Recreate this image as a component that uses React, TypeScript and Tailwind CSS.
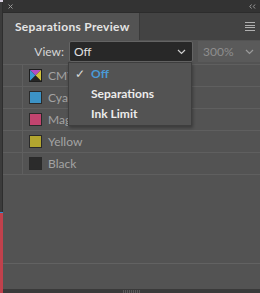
const rows = [
  { name: "CMYK", kind: "cmyk" },
  { name: "Cyan", color: "bg-[#3c93c6]" },
  { name: "Magenta", color: "bg-[#c2446f]" },
  { name: "Yellow", color: "bg-[#b2a52f]" },
  { name: "Black", color: "bg-[#2b2b2b]" },
];

function Chevron({ className }: { className?: string }) {
  return (
    <svg className={className} width="9" height="6" viewBox="0 0 9 6" fill="none">
      <path d="M1 1l3.5 3.5L8 1" stroke="currentColor" strokeWidth="1.2" />
    </svg>
  );
}

function CmykSwatch() {
  return (
    <svg width="13" height="13" viewBox="0 0 13 13">
      <rect x="0" y="0" width="13" height="13" fill="#1e1e1e" />
      <polygon points="1,1 12,1 6.5,6.5" fill="#b24fc4" />
      <polygon points="12,1 12,12 6.5,6.5" fill="#cfc23a" />
      <polygon points="1,1 6.5,6.5 1,12" fill="#3a9ad0" />
      <polygon points="1,12 12,12 6.5,6.5" fill="#262626" />
    </svg>
  );
}

export default function App() {
  return (
    <div className="relative flex h-[293px] w-[260px] overflow-hidden bg-[#535353] font-['Lato',sans-serif]">
      {/* left edge */}
      <div className="flex w-[3px] shrink-0 flex-col bg-[#3b3b3b]">
        <div className="h-[2px] bg-[#d8d0e0]" />
        <div className="h-[210px] border-r border-[#2e2e2e]" />
        <div className="h-[1px] bg-[#2f8fd0]" />
        <div className="flex-1 bg-[#c0414c]" />
      </div>

      <div className="flex min-w-0 flex-1 flex-col">
        {/* title bar */}
        <div className="flex h-[12px] items-center justify-between bg-[#333333] pl-[5px] pr-[4px] text-[#9a9a9a]">
          <svg width="5" height="5" viewBox="0 0 5 5">
            <path d="M0.5 0.5l4 4M4.5 0.5l-4 4" stroke="currentColor" strokeWidth="1" />
          </svg>
          <svg width="7" height="5" viewBox="0 0 7 5" fill="none">
            <path d="M2.5 0.5L0.8 2.5l1.7 2M6 0.5L4.3 2.5l1.7 2" stroke="currentColor" strokeWidth="1" />
          </svg>
        </div>

        {/* tab row */}
        <div className="flex h-[28px] items-stretch justify-between border-t border-[#2c2c2c] bg-[#434343]">
          <div className="flex w-[137px] items-center border-r border-[#3a3a3a] bg-[#535353] pl-[12px] text-[12px] font-bold tracking-[0.3px] text-[#e4e4e4]">
            Separations Preview
          </div>
          <div className="flex flex-col justify-center gap-[1.5px] pr-[5px]">
            <div className="h-[1px] w-[10px] bg-[#b0b0b0]" />
            <div className="h-[1px] w-[10px] bg-[#b0b0b0]" />
            <div className="h-[1px] w-[10px] bg-[#b0b0b0]" />
            <div className="h-[1px] w-[10px] bg-[#b0b0b0]" />
          </div>
        </div>

        {/* view toolbar */}
        <div className="flex h-[24px] items-start pt-[1px]">
          <span className="w-[66px] pr-[5px] pt-[2px] text-right text-[12px] text-[#d6d6d6]">View:</span>
          <div className="flex h-[21px] w-[124px] items-center justify-between rounded-[2px] border border-[#646464] bg-[#282828] pl-[4px] pr-[6px] text-[12px] text-[#e0e0e0]">
            <span>Off</span>
            <Chevron className="text-[#cfcfcf]" />
          </div>
          <div className="ml-[5px] flex h-[21px] flex-1 items-center justify-between bg-[#5a5a5a] pl-[5px] pr-[6px] text-[12px] text-[#8e8e8e]">
            <span>300%</span>
            <Chevron className="text-[#9a9a9a]" />
          </div>
        </div>

        {/* separations list */}
        <div className="flex flex-col border-t border-[#5f5f5f]">
          {rows.map((r) => (
            <div key={r.name} className="flex h-[22px] border-b border-[#5f5f5f]">
              <div className="w-[20px] border-r border-[#5f5f5f]" />
              <div className="flex items-center gap-[6px] pl-[6px]">
                {r.kind === "cmyk" ? (
                  <CmykSwatch />
                ) : (
                  <div className={`h-[13px] w-[13px] border border-[#2a2a2a] ${r.color}`} />
                )}
                <span className="text-[12px] text-[#a3a3a3]">{r.name}</span>
              </div>
            </div>
          ))}
        </div>

        <div className="flex-1" />
        <div className="h-[26px] border-t border-[#626262]" />
        <div className="flex h-[4px] justify-center bg-[#3a3a3a]">
          <div className="flex gap-[1px] pt-[1px]">
            {Array.from({ length: 9 }).map((_, i) => (
              <div key={i} className="h-[3px] w-[1px] bg-[#5a5a5a]" />
            ))}
          </div>
        </div>
      </div>

      {/* dropdown menu */}
      <div className="absolute left-[68px] top-[62px] flex h-[64px] w-[124px] flex-col justify-center border border-[#3e3e3e] bg-[#535353] py-[1px] text-[12px] font-bold shadow-[1px_2px_3px_rgba(0,0,0,0.3)]">
        <div className="flex h-[21px] items-center">
          <span className="w-[22px] pl-[6px] text-[12px] font-normal text-[#d8d8d8]">✓</span>
          <span className="text-[#4a9ad6]">Off</span>
        </div>
        <div className="flex h-[21px] items-center">
          <span className="w-[22px]" />
          <span className="text-[#ececec]">Separations</span>
        </div>
        <div className="flex h-[21px] items-center">
          <span className="w-[22px]" />
          <span className="text-[#ececec]">Ink Limit</span>
        </div>
      </div>
    </div>
  );
}
